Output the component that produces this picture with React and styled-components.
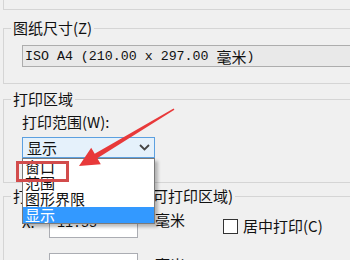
import React from "react";
import styled, { createGlobalStyle } from "styled-components";

const Global = createGlobalStyle`
  html, body {
    margin: 0;
    padding: 0;
    background: #f0f0f0;
    overflow: hidden;
  }
  body {
    font-family: "Noto Sans CJK SC", "Noto Sans", sans-serif;
    font-size: 15px;
    color: #111;
  }
`;

const Page = styled.div`
  position: relative;
  width: 350px;
  height: 260px;
  overflow: hidden;
`;

const PrevGroup = styled.div`
  height: 9px;
  width: 420px;
  margin-left: 3px;
  border-left: 1px solid #d5d5d5;
  border-bottom: 1px solid #d5d5d5;
`;

const Group = styled.fieldset`
  margin: ${(p) => p.$top}px 0 0 3px;
  padding: ${(p) => p.$pt}px 0 ${(p) => p.$pb}px 0;
  border: 1px solid #d5d5d5;
  width: 420px;
  min-width: 0;
  box-sizing: border-box;
`;

const Legend = styled.legend`
  margin-left: 7px;
  padding: 0 2px;
  font-size: 15px;
  line-height: 18px;
  white-space: nowrap;
`;

const Body = styled.div`
  padding-left: 18px;
`;

const Combo = styled.div`
  height: 22px;
  box-sizing: border-box;
  border: 1px solid #adadad;
  background: #e9e9e9;
  padding-left: 2px;
  display: flex;
  align-items: center;
  font-family: "Liberation Mono", monospace;
  font-size: 13.3px;
  white-space: pre;
`;

const Wide = styled.span`
  font-family: "Noto Sans CJK SC", sans-serif;
  font-size: 15px;
`;

const Label = styled.div`
  line-height: 18px;
`;

const SelectWrap = styled.div`
  position: relative;
  width: 133px;
  margin-top: 6px;
`;

const Select = styled.div`
  height: 21px;
  box-sizing: border-box;
  border: 1px solid #5ca0e0;
  background: #e5f1fb;
  padding: 0 4px;
  display: flex;
  align-items: center;
  justify-content: space-between;
  line-height: 18px;
`;

const List = styled.ul`
  position: absolute;
  z-index: 2;
  top: 100%;
  left: 0;
  width: 133px;
  box-sizing: border-box;
  margin: 0;
  padding: 0;
  list-style: none;
  background: #fff;
  border: 1px solid #7a7a7a;
  box-shadow: 3px 3px 3px rgba(0, 0, 0, 0.25);
`;

const Item = styled.li`
  height: 16px;
  line-height: 16px;
  padding-left: 2px;
  background: ${(p) => (p.$active ? "#3399ff" : "transparent")};
  color: ${(p) => (p.$active ? "#fff" : "#111")};
`;

const Mark = styled.div`
  position: absolute;
  z-index: 3;
  left: -6px;
  top: 24px;
  width: 53px;
  height: 21px;
  box-sizing: border-box;
  border: 3px solid #d24c4c;
`;

const Arrow = styled.svg`
  position: absolute;
  z-index: 4;
  left: 70px;
  top: 100px;
  pointer-events: none;
`;

const Row = styled.div`
  display: flex;
  align-items: flex-start;
  margin-top: ${(p) => p.$top}px;
`;

const Axis = styled.div`
  width: 27px;
  margin-top: 5px;
  line-height: 18px;
`;

const Input = styled.div`
  width: 89px;
  height: 30px;
  box-sizing: border-box;
  border: 1px solid #abadb3;
  background: #fff;
  padding: 6px 0 0 7px;
  line-height: 18px;
  font-family: "Liberation Mono", monospace;
  font-size: 13.3px;
`;

const Unit = styled.div`
  margin: 3px 0 0 17px;
  line-height: 18px;
`;

const Check = styled.label`
  display: flex;
  align-items: center;
  gap: 5px;
  margin: 9px 0 0 38px;
  line-height: 18px;
`;

const Box = styled.span`
  width: 15px;
  height: 15px;
  box-sizing: border-box;
  border: 1px solid #333;
  background: #fff;
`;

export default function App() {
  return (
    <Page>
      <Global />
      <PrevGroup />
      <Group $top={9} $pt={8} $pb={16}>
        <Legend>图纸尺寸(Z)</Legend>
        <Body>
          <Combo>
            ISO A4 (210.00 x 297.00 <Wide>毫米</Wide>)
          </Combo>
        </Body>
      </Group>
      <Group $top={6} $pt={5} $pb={24}>
        <Legend>打印区域</Legend>
        <Body>
          <Label>打印范围(W):</Label>
          <SelectWrap>
            <Select>
              <span>显示</span>
              <svg width="11" height="7" viewBox="0 0 11 7">
                <path d="M1 1 L5.5 5.5 L10 1" fill="none" stroke="#444" strokeWidth="1.8" />
              </svg>
            </Select>
            <List>
              <Item>窗口</Item>
              <Item>范围</Item>
              <Item>图形界限</Item>
              <Item $active>显示</Item>
            </List>
            <Mark />
          </SelectWrap>
        </Body>
      </Group>
      <Group $top={4} $pt={0} $pb={10}>
        <Legend>打印偏移(原点设置在可打印区域)</Legend>
        <Body>
          <Row $top={3}>
            <Axis>X:</Axis>
            <Input>11.55</Input>
            <Unit>毫米</Unit>
            <Check>
              <Box />
              居中打印(C)
            </Check>
          </Row>
          <Row $top={15}>
            <Axis>Y:</Axis>
            <Input>-13.65</Input>
            <Unit>毫米</Unit>
          </Row>
        </Body>
      </Group>
      <Arrow width="110" height="75" viewBox="0 0 110 75">
        <polygon
          points="9,66 30.8,64.2 27.3,58.2 104.4,9.7 103.6,8.4 24.7,53.8 21.2,47.8"
          fill="#e8393a"
        />
      </Arrow>
    </Page>
  );
}
